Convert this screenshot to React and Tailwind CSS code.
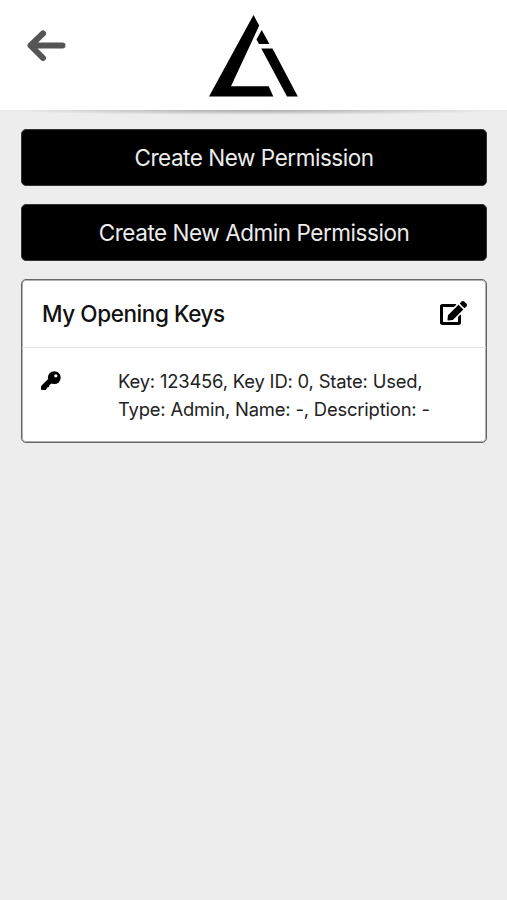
import React from 'react';
import { FaEdit } from 'react-icons/fa';

const keys = [
  { key: '123456', id: 0, state: 'Used', type: 'Admin', name: '-', description: '-' }
];

const Header = () => (
  <header className="relative h-[110px] bg-white flex justify-center shrink-0">
    <button className="absolute left-[26px] top-[28px]" aria-label="Back">
      <svg className="w-10 h-9" viewBox="0 0 40 36" fill="none" stroke="#555555" strokeWidth="6" strokeLinecap="round" strokeLinejoin="round">
        <path d="M17 5.5L4.5 17.5L17 30M5.5 17.5H36.5" />
      </svg>
    </button>
    <svg className="w-[90px] h-[84px] mt-[14px] mr-px" viewBox="0 0 90 84" fill="#000000">
      <path d="M45.5 1L51.2 11.5L23 72.3H60.7L65.3 82.5H1Z" />
      <path d="M53.7 16L61.5 30H51L48.5 25.5Z" />
      <path d="M53.3 34.5H64.5L89.8 82.5H79Z" />
    </svg>
  </header>
);

const ActionButton = ({ children }) => (
  <button className="h-[57px] w-full rounded-[5px] border border-[#333333] bg-black pt-0.5 text-[#ececec] text-[22.5px] leading-none tracking-[-0.46px]">
    {children}
  </button>
);

const KeyIcon = () => (
  <svg className="w-5 h-5 mt-1 shrink-0" viewBox="0 0 20 20">
    <path d="M7.2 8L0.6 14.4Q0 15 0 16V18Q0 19 1 19H4Q5 19 5.4 18.2L6.2 16.5L7.8 16L8.4 14.3L10.5 12.5Z" fill="#000000" />
    <circle cx="13.3" cy="6.6" r="6.4" fill="#000000" />
    <circle cx="14.8" cy="4.8" r="1.6" fill="#ffffff" />
  </svg>
);

const KeyRow = ({ item }) => (
  <div className="flex pt-[19px] pl-[19px]">
    <KeyIcon />
    <p className="ml-[57px] w-[330px] text-[18.4px] leading-[28px] tracking-[-0.18px] text-[#222222]">
      Key: {item.key}, Key ID: {item.id}, State: {item.state},<br />
      Type: {item.type}, Name: {item.name}, Description: {item.description}
    </p>
  </div>
);

const App = () => {
  return (
    <div className="min-h-screen flex flex-col bg-[#ededed] font-['Inter',sans-serif]">
      <Header />
      <div className="h-[5px] bg-[radial-gradient(ellipse_at_top,#a8a8a8_0%,#ededed_70%)]"></div>
      <main className="flex flex-col gap-[18px] pt-[14px] pl-[21px] pr-5">
        <ActionButton>Create New Permission</ActionButton>
        <ActionButton>Create New Admin Permission</ActionButton>

        <section className="h-[164px] rounded-[5px] border border-[#666666] bg-white shadow-[inset_0_0_0_1px_#b0b0b0]">
          <div className="flex h-[68px] items-center justify-between border-b border-[#e4e4e4] pl-5 pr-[19px]">
            <h2 className="text-[22.5px] font-medium tracking-[-0.42px] text-[#111111]">My Opening Keys</h2>
            <button className="pb-0.5" aria-label="Edit">
              <FaEdit className="w-[27px] h-6 text-black" />
            </button>
          </div>
          {keys.map((item) => (
            <KeyRow key={item.id} item={item} />
          ))}
        </section>
      </main>
    </div>
  );
};

export default App;
